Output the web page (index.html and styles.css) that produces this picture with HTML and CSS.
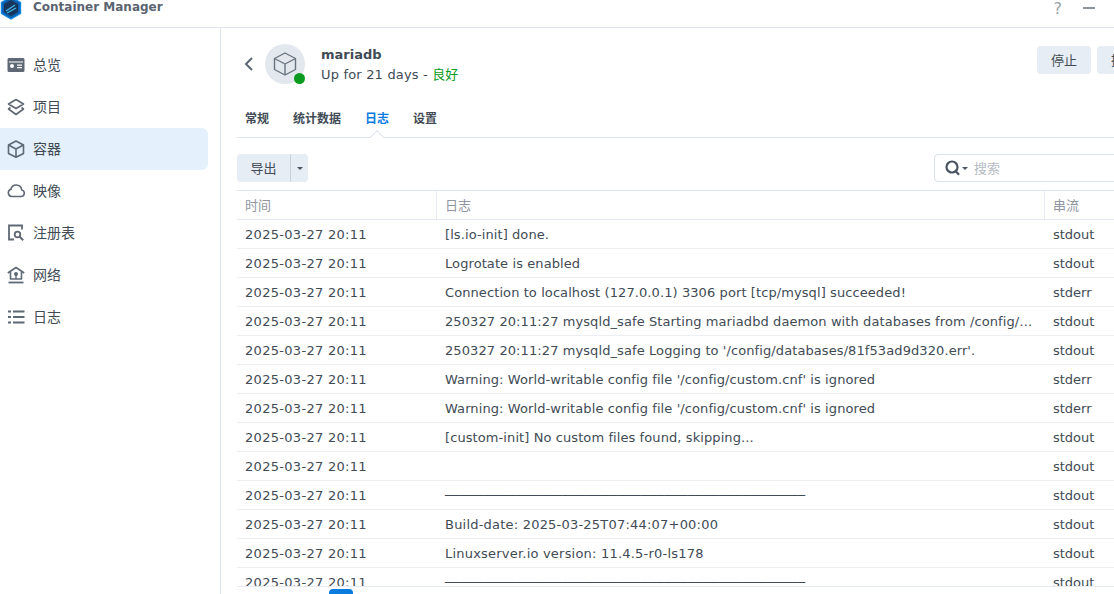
FILE: index.html
```html
<!DOCTYPE html>
<html lang="zh">
<head>
<meta charset="utf-8">
<title>Container Manager</title>
<link rel="stylesheet" href="styles.css">
</head>
<body>
<div class="app">
  <header class="titlebar">
    <svg class="logo" viewBox="0 0 22 22" width="22" height="22">
      <path d="M11 -3 L20.500 2.500 V13.500 L11 19 L1.500 13.500 V2.500 Z" fill="#0b5fb0" stroke="#0a86e0" stroke-width="1.400" stroke-linejoin="round"/>
      <path d="M11 0 L18 4 V12 L11 16 L4 12 V4 Z" fill="#17365a"/>
      <path d="M6 11 L15 5 M7 13 L16 8" stroke="#3fb6e8" stroke-width="1.400"/>
    </svg>
    <span class="app-title">Container Manager</span>
    <div class="window-tools">
      <span class="help">?</span>
      <span class="minimize"></span>
    </div>
  </header>
  <div class="workspace">
    <nav class="sidebar">
      <a class="nav-item">
        <svg class="nav-icon" viewBox="0 0 18 18"><path fill-rule="evenodd" d="M2 2h14a1.500 1.500 0 0 1 1.500 1.500v11a1.500 1.500 0 0 1-1.500 1.500H2a1.500 1.500 0 0 1-1.500-1.500v-11A1.500 1.500 0 0 1 2 2zM2 5.500v1h14v-1zM5 8a2 2 0 1 0 0 4 2 2 0 0 0 0-4zM10 8.500v1.200h5V8.500zM10 11v1.200h5V11z" fill="#5f6875"/></svg>
        <span>总览</span>
      </a>
      <a class="nav-item">
        <svg class="nav-icon" viewBox="0 0 18 18" fill="none" stroke="#5f6875" stroke-width="1.600" stroke-linejoin="round"><path d="M9 1.500 16.500 6 9 10.500 1.500 6Z"/><path d="M3.500 9.500 1.500 11 9 16.500 16.500 11 14.500 9.500"/></svg>
        <span>项目</span>
      </a>
      <a class="nav-item active">
        <svg class="nav-icon" viewBox="0 0 18 18" fill="none" stroke="#5f6875" stroke-width="1.600" stroke-linejoin="round"><path d="M9 1 16.500 5v8.500L9 17.300 1.500 13.500V5Z"/><path d="M1.500 5 9 9l7.500-4M9 9v8.300"/></svg>
        <span>容器</span>
      </a>
      <a class="nav-item">
        <svg class="nav-icon" viewBox="0 0 18 18" fill="none" stroke="#5f6875" stroke-width="1.600" stroke-linejoin="round"><path d="M4.500 14.500h9.500a3.300 3.300 0 0 0 .8-6.500A5.800 5.800 0 0 0 9.300 3 5.300 5.300 0 0 0 4 7.300a3.700 3.700 0 0 0 .5 7.200z"/></svg>
        <span>映像</span>
      </a>
      <a class="nav-item">
        <svg class="nav-icon" viewBox="0 0 18 18" fill="none" stroke="#5f6875" stroke-width="1.800"><path d="M7 15.500H2V1.500h13v4"/><circle cx="10.500" cy="10.500" r="2.800"/><path d="m12.700 12.700 3.500 3.500" stroke-width="2"/></svg>
        <span>注册表</span>
      </a>
      <a class="nav-item">
        <svg class="nav-icon" viewBox="0 0 18 18" fill="none" stroke="#5f6875" stroke-width="1.600" stroke-linejoin="round"><path d="M.8 7 9 1.500 17.200 7"/><path d="M3.500 6v7h11V6"/><circle cx="9" cy="8" r="2" fill="#5f6875" stroke="none"/><path d="M9 9v4" stroke-width="1.400"/><path d="M1.500 16.500h15" stroke-width="1.800"/></svg>
        <span>网络</span>
      </a>
      <a class="nav-item">
        <svg class="nav-icon" viewBox="0 0 18 18" fill="#5f6875"><path d="M1 2.500h3v2H1zM6 2.500h11.500v2H6zM1 8h3v2H1zM6 8h11.500v2H6zM1 13.500h3v2H1zM6 13.500h11.500v2H6z"/></svg>
        <span>日志</span>
      </a>
    </nav>
    <main class="main">
      <section class="detail-head">
        <svg class="back" viewBox="0 0 10 16" width="10" height="16" fill="none" stroke="#5c6674" stroke-width="2"><path d="M8 2 2 8l6 6"/></svg>
        <div class="avatar">
          <svg viewBox="0 0 24 26" width="24" height="26" fill="none" stroke="#6a7380" stroke-width="1.400" stroke-linejoin="round"><path d="M12 2 22.500 7.500v11L12 24 1.500 18.500v-11Z"/><path d="M1.500 7.500 12 13l10.500-5.500M12 13v11"/></svg>
          <span class="status-dot"></span>
        </div>
        <div class="head-text">
          <strong class="name">mariadb</strong>
          <span class="uptime">Up for 21 days - <em class="good">良好</em></span>
        </div>
        <div class="head-actions">
          <button class="btn">停止</button>
          <button class="btn">操作</button>
        </div>
      </section>
      <div class="tabs">
        <a class="tab">常规</a>
        <a class="tab">统计数据</a>
        <a class="tab current">日志</a>
        <a class="tab">设置</a>
      </div>
      <div class="toolbar">
        <div class="split">
          <button class="split-main">导出</button>
          <button class="split-arrow"><span class="caret"></span></button>
        </div>
        <div class="search">
          <svg viewBox="0 0 16 16" width="16" height="16" fill="none" stroke="#4a5462" stroke-width="2.200"><circle cx="7" cy="7" r="5.500"/><path d="m10.500 11 3.500 3.800"/></svg>
          <span class="caret small"></span>
          <span class="placeholder">搜索</span>
        </div>
      </div>
      <div class="table">
        <div class="row head"><div class="c-time">时间</div><div class="c-log">日志</div><div class="c-stream">串流</div></div>
        <div class="row"><div class="c-time">2025-03-27 20:11</div><div class="c-log">[ls.io-init] done.</div><div class="c-stream">stdout</div></div>
        <div class="row"><div class="c-time">2025-03-27 20:11</div><div class="c-log">Logrotate is enabled</div><div class="c-stream">stdout</div></div>
        <div class="row"><div class="c-time">2025-03-27 20:11</div><div class="c-log">Connection to localhost (127.0.0.1) 3306 port [tcp/mysql] succeeded!</div><div class="c-stream">stderr</div></div>
        <div class="row"><div class="c-time">2025-03-27 20:11</div><div class="c-log">250327 20:11:27 mysqld_safe Starting mariadbd daemon with databases from /config/databases</div><div class="c-stream">stdout</div></div>
        <div class="row"><div class="c-time">2025-03-27 20:11</div><div class="c-log">250327 20:11:27 mysqld_safe Logging to '/config/databases/81f53ad9d320.err'.</div><div class="c-stream">stdout</div></div>
        <div class="row"><div class="c-time">2025-03-27 20:11</div><div class="c-log">Warning: World-writable config file '/config/custom.cnf' is ignored</div><div class="c-stream">stderr</div></div>
        <div class="row"><div class="c-time">2025-03-27 20:11</div><div class="c-log">Warning: World-writable config file '/config/custom.cnf' is ignored</div><div class="c-stream">stderr</div></div>
        <div class="row"><div class="c-time">2025-03-27 20:11</div><div class="c-log">[custom-init] No custom files found, skipping...</div><div class="c-stream">stdout</div></div>
        <div class="row"><div class="c-time">2025-03-27 20:11</div><div class="c-log"></div><div class="c-stream">stdout</div></div>
        <div class="row"><div class="c-time">2025-03-27 20:11</div><div class="c-log rule">──────────────────────────────────────────────</div><div class="c-stream">stdout</div></div>
        <div class="row"><div class="c-time">2025-03-27 20:11</div><div class="c-log wide">Build-date: 2025-03-25T07:44:07+00:00</div><div class="c-stream">stdout</div></div>
        <div class="row"><div class="c-time">2025-03-27 20:11</div><div class="c-log wide">Linuxserver.io version: 11.4.5-r0-ls178</div><div class="c-stream">stdout</div></div>
        <div class="row"><div class="c-time">2025-03-27 20:11</div><div class="c-log rule">──────────────────────────────────────────────</div><div class="c-stream">stdout</div></div>
      </div>
      <div class="pager-tab"></div>
    </main>
  </div>
</div>
</body>
</html>
```
FILE: styles.css
```css
* { box-sizing: border-box; }
html, body { margin: 0; height: 100%; overflow: hidden; background: #fff; }
body { font-family: "DejaVu Sans", "Noto Sans CJK SC", sans-serif; font-size: 13px; color: #414b55; }
.app { width: 1114px; height: 594px; display: flex; flex-direction: column; overflow: hidden; }
.titlebar { height: 28px; flex: none; display: flex; align-items: flex-start; border-bottom: 1px solid #dfe4ea; overflow: hidden; position: relative; }
.logo { flex: none; margin-right: 11px; }
.app-title { font-weight: 700; font-size: 12px; color: #5a6470; line-height: 14px; }
.window-tools { margin-left: auto; display: flex; align-items: center; gap: 21px; padding-right: 19px; height: 16px; }
.help { font-size: 16px; color: #9aa1a9; line-height: 18px; margin-top: 2px; }
.minimize { width: 12px; height: 2px; background: #8d949d; }
.workspace { flex: 1; display: flex; min-height: 0; }
.sidebar { width: 221px; flex: none; border-right: 1px solid #dfe6ee; padding: 16px 12px 0 0; display: flex; flex-direction: column; }
.nav-item { height: 42px; display: flex; align-items: center; padding-left: 7px; gap: 8px; color: #414b55; font-family: "Noto Sans CJK SC", sans-serif; font-size: 14px; border-radius: 0 6px 6px 0; }
.nav-item span { margin-top: -2px; }
.nav-item.active { background: #e4f0fc; }
.nav-icon { width: 18px; height: 18px; flex: none; }
.main { flex: 1; min-width: 0; padding-left: 16px; display: flex; flex-direction: column; position: relative; overflow: hidden; }
.detail-head { width: 861px; height: 73px; flex: none; display: flex; align-items: flex-start; padding-top: 16px; }
.back { margin: 12px 0 0 7px; flex: none; }
.avatar { width: 40px; height: 40px; border-radius: 50%; background: #e3e8ee; margin-left: 11px; display: flex; align-items: center; justify-content: center; position: relative; flex: none; }
.status-dot { position: absolute; right: 0; bottom: 0; width: 11px; height: 11px; border-radius: 50%; background: #0b9b1e; }
.head-text { display: flex; flex-direction: column; margin-left: 16px; flex: none; padding-top: 3px; }
.name { font-size: 13px; font-weight: 700; color: #414b55; line-height: 16px; }
.uptime { font-size: 13px; line-height: 20px; white-space: nowrap; letter-spacing: .18px; margin-top: 1px; }
.good { font-style: normal; color: #0b9b1e; font-family: "Noto Sans CJK SC", sans-serif; letter-spacing: 0; }
.head-actions { margin-left: auto; display: flex; gap: 6px; margin-right: -53px; flex: none; padding-top: 2px; }
.btn { width: 54px; height: 28px; border: 0; border-radius: 4px; background: #e7edf4; color: #414b55; font-family: "Noto Sans CJK SC", sans-serif; font-size: 13px; padding: 0 0 2px; }
.tabs { width: 1000px; height: 37px; flex: none; display: flex; border-bottom: 1px solid #dfe6ee; padding: 0 0 4px 8px; gap: 24px; align-items: center; }
.tab { font-family: "Noto Sans CJK SC", sans-serif; font-size: 12px; font-weight: 700; color: #414b55; position: relative; white-space: nowrap; }
.tab.current { color: #0a7ce0; }
.tab.current::after { content: ""; position: absolute; left: 50%; bottom: -16px; width: 9px; height: 9px; margin-left: -5px; background: #fff; border-left: 1px solid #dfe6ee; border-top: 1px solid #dfe6ee; transform: rotate(45deg); }
.toolbar { width: 1000px; height: 28px; flex: none; margin-top: 16px; display: flex; justify-content: space-between; padding-right: 63px; }
.split { display: flex; height: 28px; }
.split-main { width: 53px; border: 0; background: #e7edf4; border-radius: 4px 0 0 4px; font-family: "Noto Sans CJK SC", sans-serif; font-size: 13px; color: #414b55; padding: 0 0 2px; }
.split-arrow { width: 18px; border: 0; border-left: 1px solid #c9d2dc; background: #e7edf4; border-radius: 0 4px 4px 0; padding: 0; display: flex; align-items: center; justify-content: center; }
.caret { width: 0; height: 0; border: 3px solid transparent; border-top: 3px solid #4a5462; border-bottom: 0; display: block; }
.search { width: 240px; height: 28px; border: 1px solid #d9e1ea; border-radius: 4px; display: flex; align-items: center; padding-left: 10px; background: #fff; }
.caret.small { margin-left: 1px; }
.placeholder { font-family: "Noto Sans CJK SC", sans-serif; font-size: 13px; color: #b5bbc3; margin: -2px 0 0 6px; }
.table { width: 1000px; flex: none; height: 397px; margin-top: 8px; border-top: 1px solid #dfe6ee; border-bottom: 1px solid #e6ebf1; overflow: hidden; }
.row { display: flex; height: 29px; border-bottom: 1px solid #ebeef3; padding-top: 2px; align-items: center; white-space: nowrap; line-height: 26px; }
.row.head { padding-top: 0; line-height: 28px; border-bottom-color: #e3e8ee; color: #8f969f; font-family: "Noto Sans CJK SC", sans-serif; }
.row.head > div { height: 100%; border-right: 1px solid #e6ebf1; letter-spacing: 0; }
.c-time { width: 200px; padding-left: 8px; flex: none; letter-spacing: .3px; }
.c-log { width: 608px; padding: 0 8px; flex: none; overflow: hidden; text-overflow: ellipsis; letter-spacing: .09px; }
.c-log.rule { letter-spacing: 0; }
.c-log.wide { letter-spacing: .21px; }
.c-stream { flex: 1; padding-left: 8px; }
.pager-tab { position: absolute; left: 108px; bottom: 0; width: 24px; height: 5px; background: #0a7ce0; border-radius: 4px 4px 0 0; }
```
